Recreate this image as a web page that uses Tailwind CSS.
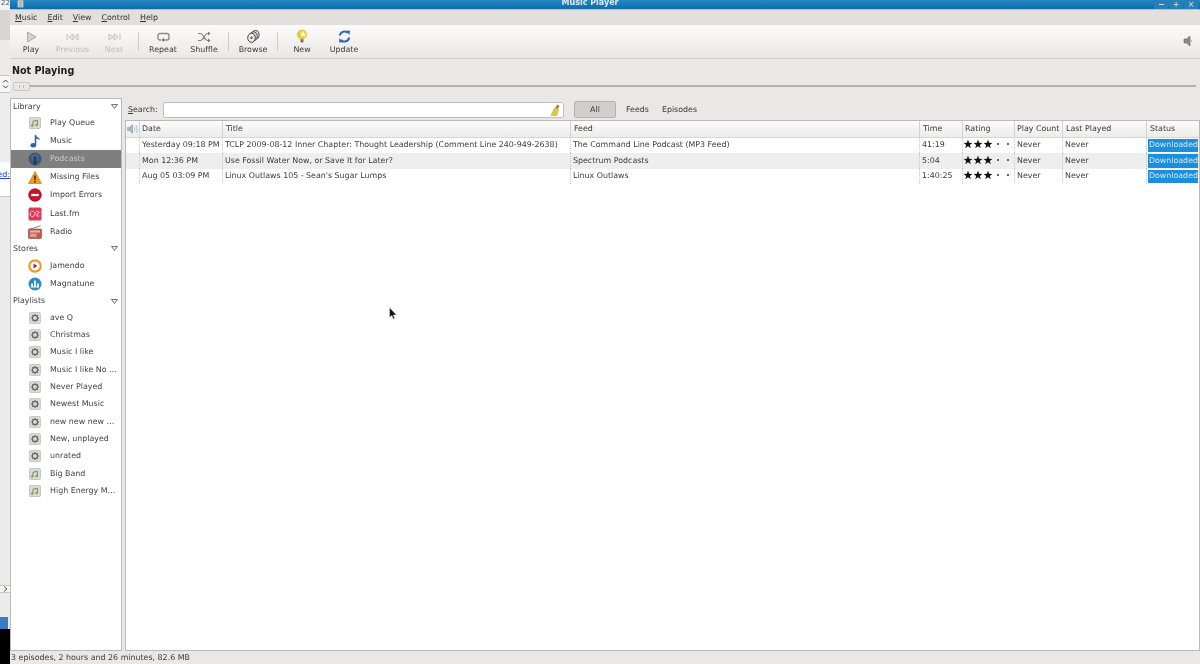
<!DOCTYPE html>
<html lang="en">
<head>
<meta charset="UTF-8">
<title>Music Player</title>
<script src="https://cdn.jsdelivr.net/npm/@tailwindcss/browser@4"></script>
</head>
<body class="w-[1200px] h-[664px] overflow-hidden bg-[#eae8e6] font-['DejaVu_Sans',sans-serif] text-[7.9px] leading-none text-[#3a3a3a]">

<svg class="hidden">
  <symbol id="gear" viewBox="0 0 12 12">
    <rect x="0.5" y="0.5" width="11" height="11" rx="1" fill="#d8d7d6" stroke="#bcbbba" stroke-width="0.7"/>
    <circle cx="6" cy="6" r="2.6" fill="none" stroke="#666" stroke-width="1.2"/>
    <path d="M6 2v1.4M6 8.6V10M2 6h1.4M8.6 6H10M3.2 3.2l1 1M7.8 7.8l1 1M8.8 3.2l-1 1M4.2 7.8l-1 1" stroke="#666" stroke-width="1"/>
  </symbol>
  <symbol id="notes" viewBox="0 0 12 12">
    <rect x="0.5" y="0.5" width="11" height="11" rx="1" fill="#d9d8d6" stroke="#b5b4b3" stroke-width="0.7"/>
    <path d="M4 8.5V4.2l4.4-.8v4.4" fill="none" stroke="#5fa32a" stroke-width="1"/>
    <ellipse cx="3.2" cy="8.6" rx="1.2" ry="1" fill="#5fa32a"/>
    <ellipse cx="7.6" cy="7.9" rx="1.2" ry="1" fill="#5fa32a"/>
  </symbol>
  <symbol id="star" viewBox="0 0 10 10">
    <polygon points="5,0.6 6.1,3.8 9.4,3.9 6.8,5.9 7.8,9.2 5,7.3 2.200,9.2 3.200,5.900 0.600,3.900 3.900,3.800" fill="#111"/>
  </symbol>
</svg>

<div class="flex h-full blur-[0.5px]">

  <!-- bits of the window behind -->
  <div class="w-[10px] shrink-0 flex flex-col">
    <div class="h-[10px] bg-[#f4f3f3] flex justify-end text-[7px] text-[#555] overflow-hidden"><span class="whitespace-nowrap">22</span></div>
    <div class="h-[30px] bg-[#d8d6d5]"></div>
    <div class="h-[35px] bg-[#ecebea]"></div>
    <div class="h-[18px] bg-[#f6f6f6] border-y border-[#c8c6c4] flex items-center justify-center">
      <svg width="7" height="12" viewBox="0 0 7 12"><path d="M1 4.5 3.5 2 6 4.5M1 7.5 3.500 10 6 7.500" fill="none" stroke="#444" stroke-width="1"/></svg>
    </div>
    <div class="h-[69px] bg-[#eeeded]"></div>
    <div class="h-[35px] bg-white flex items-center justify-end overflow-hidden border-b border-[#c8c6c4] pb-[8px]"><span class="text-[#2a3fe0] underline whitespace-nowrap">ed:</span></div>
    <div class="h-[388px] bg-[#ecebea]"></div>
    <div class="h-[8px] bg-[#f5f5f5] border-y border-[#c8c6c4] flex items-center justify-center">
      <svg width="5" height="6" viewBox="0 0 5 6"><path d="M1 .5 4 3 1 5.500" fill="none" stroke="#555" stroke-width="1"/></svg>
    </div>
    <div class="h-[24px] bg-[#ecebea]"></div>
    <div class="h-[12px] w-[8px] bg-[#3a7cc4]"></div>
    <div class="flex-1 bg-black"></div>
  </div>

  <div class="flex-1 min-w-0 flex flex-col">

    <!-- title bar -->
    <div class="h-[9px] shrink-0 bg-gradient-to-b from-[#2488c2] to-[#0c6cab] flex items-end justify-center relative overflow-hidden">
      <svg class="absolute left-[7px] top-0" width="7" height="8" viewBox="0 0 7 8"><rect x=".5" y="0" width="6" height="7.500" fill="#c9d3d8" stroke="#6d7f8a" stroke-width=".6"/><path d="M2 2h3M2 4h3M2 6h3" stroke="#7b8b94" stroke-width=".7"/></svg>
      <span class="font-bold text-[8px] text-[#dbe9f2] -translate-y-[2px] -translate-x-[15px]">Music Player</span>
      <div class="absolute right-[2px] top-0 flex gap-px">
        <div class="w-[14px] h-[9px] bg-[#267fb6] flex items-center justify-center"><div class="w-[5px] h-px bg-[#cfe3ef]"></div></div>
        <div class="w-[14px] h-[9px] bg-[#267fb6] flex items-center justify-center text-[#cfe3ef] text-[8px]">+</div>
        <div class="w-[14px] h-[9px] bg-[#267fb6] flex items-center justify-center text-[#cfe3ef] text-[8px]">×</div>
      </div>
    </div>

    <!-- menu bar -->
    <div class="h-[16px] shrink-0 bg-[#e2dfdc] flex items-center gap-[10px] pl-[5px] text-[#333] border-t border-[#a9c4d4]">
      <span><span class="underline">M</span>usic</span>
      <span><span class="underline">E</span>dit</span>
      <span><span class="underline">V</span>iew</span>
      <span><span class="underline">C</span>ontrol</span>
      <span><span class="underline">H</span>elp</span>
    </div>

    <!-- toolbar -->
    <div class="h-[34px] shrink-0 bg-gradient-to-b from-[#fbfbfb] to-[#eae8e6] border-b border-[#cfcccb] flex items-stretch relative">
      <div class="w-[42px] flex flex-col items-center justify-end pb-[4px] gap-[3px]">
        <svg width="11" height="12" viewBox="0 0 11 12"><path d="M1.5 1 10 6l-8.5 5z" fill="#d2d2d1" stroke="#9c9c9c" stroke-width=".8"/></svg>
        <span>Play</span>
      </div>
      <div class="w-[41px] flex flex-col items-center justify-end pb-[4px] gap-[3px] text-[#bdbcbb]">
        <svg width="14" height="12" viewBox="0 0 14 12"><path d="M1 3v6M7 3 3 6l4 3zM12 3 8 6l4 3z" fill="#eee" stroke="#bdbcbb" stroke-width=".9"/></svg>
        <span>Previous</span>
      </div>
      <div class="w-[42px] flex flex-col items-center justify-end pb-[4px] gap-[3px] text-[#bdbcbb]">
        <svg width="14" height="12" viewBox="0 0 14 12"><path d="M13 3v6M7 3l4 3-4 3zM2 3l4 3-4 3z" fill="#eee" stroke="#bdbcbb" stroke-width=".9"/></svg>
        <span>Next</span>
      </div>
      <div class="w-[4px] flex items-center justify-end"><div class="w-px h-[19px] bg-[#cdcbc9]"></div></div>
      <div class="w-[42px] ml-[3px] flex flex-col items-center justify-end pb-[4px] gap-[3px]">
        <svg width="13" height="12" viewBox="0 0 13 12"><path d="M4 9H3a2 2 0 0 1-2-2V4.500a2 2 0 0 1 2-2h7a2 2 0 0 1 2 2V7a2 2 0 0 1-2 2H6" fill="none" stroke="#8a8a8a" stroke-width="1.400"/><path d="M7 6.500 4.500 9 7 11z" fill="#777"/></svg>
        <span>Repeat</span>
      </div>
      <div class="w-[40px] flex flex-col items-center justify-end pb-[4px] gap-[3px]">
        <svg width="14" height="12" viewBox="0 0 14 12"><path d="M1 2.500h2.500c3 0 4 7 7 7H12M1 9.500h2.500c3 0 4-7 7-7H12" fill="none" stroke="#858585" stroke-width="1.200"/><path d="M11 .5 13.500 2.500 11 4.500zM11 7.500l2.500 2-2.500 2z" fill="#777"/></svg>
        <span>Shuffle</span>
      </div>
      <div class="w-[5px] flex items-center justify-end"><div class="w-px h-[19px] bg-[#cdcbc9]"></div></div>
      <div class="w-[42px] ml-[3px] flex flex-col items-center justify-end pb-[4px] gap-[3px]">
        <svg width="13" height="13" viewBox="0 0 13 13" class="-mt-px"><ellipse cx="8.500" cy="4.800" rx="3.600" ry="4.300" fill="#d9d9d9" stroke="#444" stroke-width=".9"/><ellipse cx="6.500" cy="6.300" rx="3.800" ry="4.500" fill="#d9d9d9" stroke="#444" stroke-width=".9"/><ellipse cx="4.500" cy="7.800" rx="3.800" ry="4.600" fill="#ececec" stroke="#333" stroke-width=".9"/><circle cx="4.500" cy="7.800" r="1.200" fill="#666"/></svg>
        <span>Browse</span>
      </div>
      <div class="w-[4px] flex items-center justify-end"><div class="w-px h-[19px] bg-[#cdcbc9]"></div></div>
      <div class="w-[42px] ml-[3px] flex flex-col items-center justify-end pb-[4px] gap-[3px]">
        <svg width="14" height="14" viewBox="0 0 14 14" class="-mt-[2px]"><path d="M5.500 10h3v2.500a1 1 0 0 1-1 1h-1a1 1 0 0 1-1-1z" fill="#6f6f6c"/><circle cx="7" cy="5.500" r="5" fill="#e8c93a"/><polygon points="8,1.500 9,4 11.500,4.200 9.600,5.800 10.200,8.200 8,6.900 5.800,8.200 6.400,5.800 4.500,4.200 7,4" fill="#fffbe0"/></svg>
        <span>New</span>
      </div>
      <div class="w-[42px] flex flex-col items-center justify-end pb-[4px] gap-[3px]">
        <svg width="13" height="13" viewBox="0 0 13 13" class="-mt-px"><path d="M1.800 5.500A4.800 4.800 0 0 1 10 3" fill="none" stroke="#2f68b5" stroke-width="2"/><path d="M8 .5 12 .8 11.500 5z" fill="#2f68b5"/><path d="M11.200 7.500A4.800 4.800 0 0 1 3 10" fill="none" stroke="#2f68b5" stroke-width="2"/><path d="M5 12.500 1 12.200 1.500 8z" fill="#2f68b5"/></svg>
        <span>Update</span>
      </div>
      <div class="absolute right-[6px] top-[10px]">
        <svg width="11" height="12" viewBox="0 0 11 12"><path d="M1 4h2.500L7 1v10L3.500 8H1z" fill="#8a8a88" stroke="#666" stroke-width=".6"/><path d="M8.500 5v2" stroke="#9ab" stroke-width=".8"/></svg>
      </div>
    </div>

    <!-- now playing -->
    <div class="h-[39px] shrink-0 flex flex-col">
      <div class="pl-[2px] pt-[7px] font-bold text-[9.600px] text-[#1c1c1c]">Not Playing</div>
      <div class="flex items-center pl-[3px] pr-[4px] mt-[6px]">
        <div class="w-[17px] h-[9px] rounded-[2px] bg-[#e9e7e5] border border-[#c9c6c4] flex items-center justify-center shrink-0"><div class="w-[5px] h-[3px] border-x border-[#bbb]"></div></div>
        <div class="flex-1 h-[2px] bg-[#b5aeae]"></div>
      </div>
    </div>

    <!-- body -->
    <div class="flex-1 min-h-0 flex">

      <!-- sidebar -->
      <div class="w-[112px] shrink-0 bg-white border border-[#bcbab8] overflow-hidden text-[#3f3f3f]">
        <div class="h-[15px] flex items-center justify-between pl-[2px] pr-[3px]"><span>Library</span><svg width="7" height="5" viewBox="0 0 7 5"><path d="M.5.5h6L3.500 4.500z" fill="#eee" stroke="#555" stroke-width=".8"/></svg></div>
        <div class="h-[18px] flex items-center">
          <svg class="ml-[18px] w-[12px] h-[12px]"><use href="#notes"/></svg><span class="ml-[9px]">Play Queue</span>
        </div>
        <div class="h-[18px] flex items-center">
          <svg class="ml-[19px]" width="11" height="14" viewBox="0 0 11 14"><path d="M5.500 1v10" stroke="#2f5fa8" stroke-width="1.500"/><path d="M5.500 1c1 2.500 4.500 2.500 4.500 5.500C9 5 7 4.700 5.500 4.500z" fill="#2f5fa8"/><ellipse cx="3.300" cy="11.200" rx="2.800" ry="2.200" fill="#2f5fa8"/></svg><span class="ml-[9px]">Music</span>
        </div>
        <div class="h-[18px] flex items-center bg-[#7f7f7f] text-[#c8c8c8]">
          <svg class="ml-[17px]" width="14" height="14" viewBox="0 0 14 14"><circle cx="7" cy="7" r="6.500" fill="#3d5878"/><circle cx="7" cy="6" r="3.500" fill="#4a6d9c"/><rect x="5.500" y="4" width="3" height="9" rx="1.500" fill="#2a3a52"/></svg><span class="ml-[8px]">Podcasts</span>
        </div>
        <div class="h-[18px] flex items-center">
          <svg class="ml-[17px]" width="14" height="13" viewBox="0 0 14 13"><path d="M7 .5 13.500 12.500H.5z" fill="#f09a2a" stroke="#d9861c" stroke-width=".8"/><path d="M7 4.500V9" stroke="#3a2a10" stroke-width="1.500"/><circle cx="7" cy="10.700" r=".9" fill="#3a2a10"/></svg><span class="ml-[8px]">Missing Files</span>
        </div>
        <div class="h-[18.500px] flex items-center">
          <svg class="ml-[17px]" width="14" height="14" viewBox="0 0 14 14"><circle cx="7" cy="7" r="6.300" fill="#c8132a" stroke="#8e0f1f" stroke-width=".7"/><rect x="3.200" y="5.900" width="7.600" height="2.200" fill="#fff"/></svg><span class="ml-[8px]">Import Errors</span>
        </div>
        <div class="h-[18px] flex items-center">
          <svg class="ml-[17px]" width="14" height="14" viewBox="0 0 14 14"><rect x=".5" y=".5" width="13" height="13" rx="1.500" fill="#de3a5c"/><path d="M6.500 5.500C6 4.500 5 4.300 4.300 4.300 3 4.300 2.200 5.500 2.200 7s.8 2.700 2.100 2.700c1.500 0 2-1 2.700-2.700s1.200-2.700 2.700-2.700c.8 0 1.300.5 1.300 1.200 0 1.500-2.300 1-2.300 2.500 0 .8.600 1.300 1.300 1.300.5 0 1-.2 1.300-.6" fill="none" stroke="#f9dbe1" stroke-width=".9"/></svg><span class="ml-[8px]">Last.fm</span>
        </div>
        <div class="h-[18px] flex items-center">
          <svg class="ml-[17px]" width="14" height="14" viewBox="0 0 14 14"><path d="M1 4.500 12.500.8" stroke="#777" stroke-width=".9"/><rect x=".5" y="4" width="13" height="9.500" rx="1" fill="#c65a50" stroke="#8e4138" stroke-width=".6"/><rect x="2" y="5.500" width="10" height="2" fill="#e6b5a8"/><rect x="2" y="8.500" width="6.500" height="3.500" fill="#e49a8a"/></svg><span class="ml-[8px]">Radio</span>
        </div>
        <div class="h-[16px] flex items-center justify-between pl-[2px] pr-[3px]"><span>Stores</span><svg width="7" height="5" viewBox="0 0 7 5"><path d="M.5.5h6L3.500 4.500z" fill="#eee" stroke="#555" stroke-width=".8"/></svg></div>
        <div class="h-[18px] flex items-center">
          <svg class="ml-[17px]" width="14" height="14" viewBox="0 0 14 14"><circle cx="7" cy="7" r="5.700" fill="#fff" stroke="#ef9a1f" stroke-width="2.200"/><path d="M5.500 4.500 9.500 7l-4 2.500z" fill="#7b2f8f"/></svg><span class="ml-[8px]">Jamendo</span>
        </div>
        <div class="h-[18.500px] flex items-center">
          <svg class="ml-[17px]" width="14" height="14" viewBox="0 0 14 14"><circle cx="7" cy="7" r="6.500" fill="#2e8cc4"/><path d="M4 10V6.500M7 10V3.500M10 10V6.500" stroke="#fff" stroke-width="1.700"/><path d="M3 10h8" stroke="#fff" stroke-width="1"/></svg><span class="ml-[8px]">Magnatune</span>
        </div>
        <div class="h-[16px] flex items-center justify-between pl-[2px] pr-[3px]"><span>Playlists</span><svg width="7" height="5" viewBox="0 0 7 5"><path d="M.5.5h6L3.500 4.500z" fill="#eee" stroke="#555" stroke-width=".8"/></svg></div>
        <div class="h-[17.350px] flex items-center"><svg class="ml-[18px] w-[12px] h-[12px]"><use href="#gear"/></svg><span class="ml-[9px]">ave Q</span></div>
        <div class="h-[17.350px] flex items-center"><svg class="ml-[18px] w-[12px] h-[12px]"><use href="#gear"/></svg><span class="ml-[9px]">Christmas</span></div>
        <div class="h-[17.350px] flex items-center"><svg class="ml-[18px] w-[12px] h-[12px]"><use href="#gear"/></svg><span class="ml-[9px]">Music I like</span></div>
        <div class="h-[17.350px] flex items-center"><svg class="ml-[18px] w-[12px] h-[12px]"><use href="#gear"/></svg><span class="ml-[9px]">Music I like No …</span></div>
        <div class="h-[17.350px] flex items-center"><svg class="ml-[18px] w-[12px] h-[12px]"><use href="#gear"/></svg><span class="ml-[9px]">Never Played</span></div>
        <div class="h-[17.350px] flex items-center"><svg class="ml-[18px] w-[12px] h-[12px]"><use href="#gear"/></svg><span class="ml-[9px]">Newest Music</span></div>
        <div class="h-[17.350px] flex items-center"><svg class="ml-[18px] w-[12px] h-[12px]"><use href="#gear"/></svg><span class="ml-[9px]">new new new …</span></div>
        <div class="h-[17.350px] flex items-center"><svg class="ml-[18px] w-[12px] h-[12px]"><use href="#gear"/></svg><span class="ml-[9px]">New, unplayed</span></div>
        <div class="h-[17.350px] flex items-center"><svg class="ml-[18px] w-[12px] h-[12px]"><use href="#gear"/></svg><span class="ml-[9px]">unrated</span></div>
        <div class="h-[17.350px] flex items-center"><svg class="ml-[18px] w-[12px] h-[12px]"><use href="#notes"/></svg><span class="ml-[9px]">Big Band</span></div>
        <div class="h-[17.350px] flex items-center"><svg class="ml-[18px] w-[12px] h-[12px]"><use href="#notes"/></svg><span class="ml-[9px]">High Energy M…</span></div>
      </div>

      <!-- right pane -->
      <div class="flex-1 min-w-0 flex flex-col pl-[3px]">
        <div class="h-[22px] shrink-0 flex items-center pl-[3px] pt-[1px]">
          <span class="w-[35px]"><span class="underline">S</span>earch:</span>
          <div class="w-[401px] h-[16px] bg-white border border-[#c3bfbc] rounded-[2px] flex items-center justify-end pr-[2px]">
            <svg width="11" height="12" viewBox="0 0 11 12"><path d="M7 .5 9.500 1.800 8 5 5.500 3.800z" fill="#a5862f"/><path d="M4.800 3.500 8.300 5.300 6.800 11.500H1z" fill="#e6c63a" stroke="#b59a2a" stroke-width=".5"/></svg>
          </div>
          <div class="ml-[10px] w-[42px] h-[17px] bg-[#d2cecb] border border-[#b5b1ae] rounded-[2px] flex items-center justify-center">All</div>
          <span class="ml-[10px]">Feeds</span>
          <span class="ml-[13px]">Episodes</span>
        </div>

        <div class="flex-1 min-h-0 bg-white border border-[#bcbab8]">
          <div class="h-[17px] grid grid-cols-[14px_83px_348px_349px_43px_52px_48px_84px_52px] bg-gradient-to-b from-[#fbfbfb] to-[#ececea] border-b border-[#d8d6d4] items-center">
            <div class="h-full border-r border-[#d5d3d1] flex items-center pl-px">
              <svg width="11" height="10" viewBox="0 0 11 10"><path d="M.5 3.500h2L5.500.5v9l-3-3h-2z" fill="#a9b4c0" stroke="#8895a3" stroke-width=".5"/><path d="M7 2.500c1 1.500 1 3.500 0 5M9 1c1.600 2.500 1.600 5.500 0 8" fill="none" stroke="#9fb1c4" stroke-width=".8"/></svg>
            </div>
            <div class="h-full flex items-center pl-[2px] border-r border-[#d5d3d1]">Date</div>
            <div class="h-full flex items-center pl-[3px] border-r border-[#d5d3d1]">Title</div>
            <div class="h-full flex items-center pl-[3px] border-r border-[#d5d3d1]">Feed</div>
            <div class="h-full flex items-center pl-[3px] border-r border-[#d5d3d1]">Time</div>
            <div class="h-full flex items-center pl-[2px] border-r border-[#d5d3d1]">Rating</div>
            <div class="h-full flex items-center pl-[2px] border-r border-[#d5d3d1] whitespace-nowrap">Play Count</div>
            <div class="h-full flex items-center pl-[3px] border-r border-[#d5d3d1]">Last Played</div>
            <div class="h-full flex items-center pl-[3px]">Status</div>
          </div>

          <div class="h-[15px] grid grid-cols-[14px_83px_348px_349px_43px_52px_48px_84px_52px] items-center">
            <div class="h-full border-r border-dotted border-[#c9c9c9]"></div>
            <div class="h-full flex items-center pl-[2px] pb-px border-r border-dotted border-[#c9c9c9] whitespace-nowrap">Yesterday 09:18 PM</div>
            <div class="h-full flex items-center pl-[2px] pb-px border-r border-dotted border-[#c9c9c9] whitespace-nowrap">TCLP 2009-08-12 Inner Chapter: Thought Leadership (Comment Line 240-949-2638)</div>
            <div class="h-full flex items-center pl-[2px] pb-px border-r border-dotted border-[#c9c9c9] whitespace-nowrap">The Command Line Podcast (MP3 Feed)</div>
            <div class="h-full flex items-center pl-[2px] pb-px border-r border-dotted border-[#c9c9c9]">41:19</div>
            <div class="h-full flex items-start pt-px border-r border-dotted border-[#c9c9c9]">
              <svg class="w-[10px] h-[10px]"><use href="#star"/></svg><svg class="w-[10px] h-[10px]"><use href="#star"/></svg><svg class="w-[10px] h-[10px]"><use href="#star"/></svg>
              <div class="w-[10px] h-[10px] flex items-center justify-center"><div class="size-[2px] bg-[#333] rounded-full"></div></div><div class="w-[10px] h-[10px] flex items-center justify-center"><div class="size-[2px] bg-[#333] rounded-full"></div></div>
            </div>
            <div class="h-full flex items-center pl-[2px] pb-px border-r border-dotted border-[#c9c9c9]">Never</div>
            <div class="h-full flex items-center pl-[2px] pb-px border-r border-dotted border-[#c9c9c9]">Never</div>
            <div class="h-[13px] ml-[1px] mr-[1px] bg-[#1b8fdc] text-[#cfeaff] flex items-center justify-end overflow-hidden whitespace-nowrap pb-px">Downloaded</div>
          </div>

          <div class="h-[16px] bg-[#efeeee] grid grid-cols-[14px_83px_348px_349px_43px_52px_48px_84px_52px] items-center">
            <div class="h-full border-r border-dotted border-[#c9c9c9]"></div>
            <div class="h-full flex items-center pl-[2px] border-r border-dotted border-[#c9c9c9] whitespace-nowrap">Mon 12:36 PM</div>
            <div class="h-full flex items-center pl-[2px] border-r border-dotted border-[#c9c9c9] whitespace-nowrap">Use Fossil Water Now, or Save It for Later?</div>
            <div class="h-full flex items-center pl-[2px] border-r border-dotted border-[#c9c9c9] whitespace-nowrap">Spectrum Podcasts</div>
            <div class="h-full flex items-center pl-[2px] border-r border-dotted border-[#c9c9c9]">5:04</div>
            <div class="h-full flex items-start pt-[2px] border-r border-dotted border-[#c9c9c9]">
              <svg class="w-[10px] h-[10px]"><use href="#star"/></svg><svg class="w-[10px] h-[10px]"><use href="#star"/></svg><svg class="w-[10px] h-[10px]"><use href="#star"/></svg>
              <div class="w-[10px] h-[10px] flex items-center justify-center"><div class="size-[2px] bg-[#333] rounded-full"></div></div><div class="w-[10px] h-[10px] flex items-center justify-center"><div class="size-[2px] bg-[#333] rounded-full"></div></div>
            </div>
            <div class="h-full flex items-center pl-[2px] border-r border-dotted border-[#c9c9c9]">Never</div>
            <div class="h-full flex items-center pl-[2px] border-r border-dotted border-[#c9c9c9]">Never</div>
            <div class="h-[14px] ml-[1px] mr-[1px] bg-[#1b8fdc] text-[#cfeaff] flex items-center justify-end overflow-hidden whitespace-nowrap">Downloaded</div>
          </div>

          <div class="h-[15px] grid grid-cols-[14px_83px_348px_349px_43px_52px_48px_84px_52px] items-center">
            <div class="h-full border-r border-dotted border-[#c9c9c9]"></div>
            <div class="h-full flex items-center pl-[2px] pb-px border-r border-dotted border-[#c9c9c9] whitespace-nowrap">Aug 05 03:09 PM</div>
            <div class="h-full flex items-center pl-[2px] pb-px border-r border-dotted border-[#c9c9c9] whitespace-nowrap">Linux Outlaws 105 - Sean's Sugar Lumps</div>
            <div class="h-full flex items-center pl-[2px] pb-px border-r border-dotted border-[#c9c9c9] whitespace-nowrap">Linux Outlaws</div>
            <div class="h-full flex items-center pl-[2px] pb-px border-r border-dotted border-[#c9c9c9]">1:40:25</div>
            <div class="h-full flex items-start pt-px border-r border-dotted border-[#c9c9c9]">
              <svg class="w-[10px] h-[10px]"><use href="#star"/></svg><svg class="w-[10px] h-[10px]"><use href="#star"/></svg><svg class="w-[10px] h-[10px]"><use href="#star"/></svg>
              <div class="w-[10px] h-[10px] flex items-center justify-center"><div class="size-[2px] bg-[#333] rounded-full"></div></div><div class="w-[10px] h-[10px] flex items-center justify-center"><div class="size-[2px] bg-[#333] rounded-full"></div></div>
            </div>
            <div class="h-full flex items-center pl-[2px] pb-px border-r border-dotted border-[#c9c9c9]">Never</div>
            <div class="h-full flex items-center pl-[2px] pb-px border-r border-dotted border-[#c9c9c9]">Never</div>
            <div class="h-[13px] ml-[1px] mr-[1px] bg-[#1b8fdc] text-[#cfeaff] flex items-center justify-end overflow-hidden whitespace-nowrap pb-px">Downloaded</div>
          </div>
        </div>
      </div>
    </div>

    <!-- status bar -->
    <div class="h-[13px] shrink-0 flex items-center pl-px">3 episodes, 2 hours and 26 minutes, 82.6 MB</div>
  </div>
</div>

<!-- mouse pointer -->
<svg class="absolute left-[389px] top-[307px]" width="8" height="13" viewBox="0 0 8 13"><path d="M.5.5v10l2.300-2 1.500 3.500 1.500-.7-1.500-3.300H7.500z" fill="#111" stroke="#eee" stroke-width=".5"/></svg>

</body>
</html>
